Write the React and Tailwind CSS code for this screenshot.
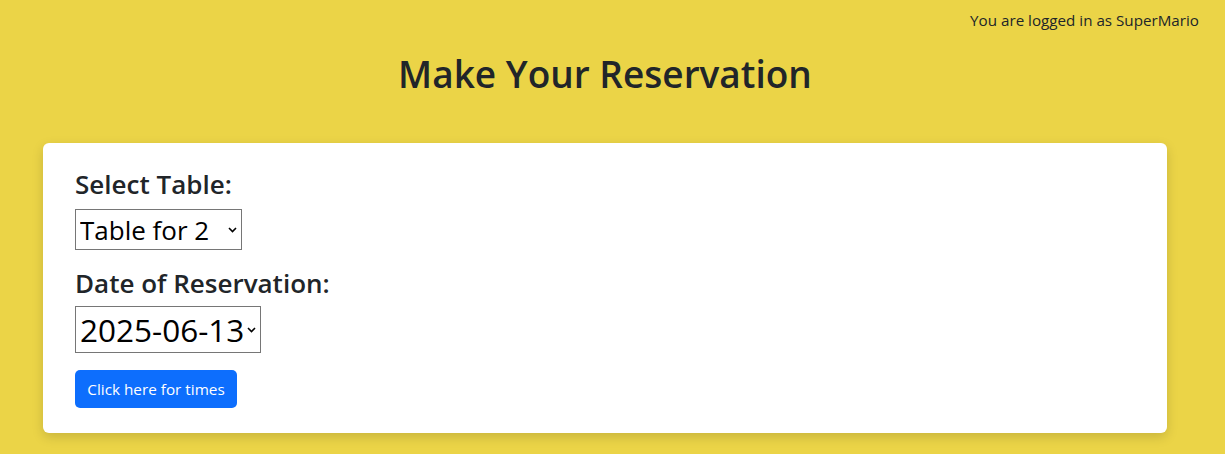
import React, { useState } from 'react';

const Chevron = () => (
  <svg
    className="pointer-events-none absolute right-[5px] top-1/2 -translate-y-1/2"
    width="9"
    height="6"
    viewBox="0 0 9 6"
    fill="none"
  >
    <path d="M1 1l3.5 3.5L8 1" stroke="#000" strokeWidth="1.6" />
  </svg>
);

const App = () => {
  const [table, setTable] = useState('2');
  const [date, setDate] = useState('2025-06-13');

  return (
    <div
      className="min-h-[454px] w-full bg-[#ebd447] text-[#212529]"
      style={{ fontFamily: '"Open Sans", "Noto Sans", sans-serif' }}
    >
      <div className="w-[1210px]">
        {/* Header */}
        <div className="flex justify-end pr-[11px] pt-[10px] text-[15.2px] leading-[20px]">
          You are logged in as SuperMario
        </div>
        <h1 className="mt-[22px] text-center text-[37px] font-semibold leading-[44px]">
          Make Your Reservation
        </h1>

        {/* Form card */}
        <div className="mx-[43px] mt-[47px] rounded-md bg-white px-[32px] pt-[24px] pb-[25px] shadow-[0_4px_12px_rgba(0,0,0,0.15)]">
          <label htmlFor="table" className="block text-[26px] font-semibold leading-[34px]">
            Select Table:
          </label>
          <div className="relative mt-[8px] inline-block">
            <select
              id="table"
              value={table}
              onChange={(e) => setTable(e.target.value)}
              className="h-[41px] w-[167px] appearance-none rounded-none border border-[#767676] bg-white pl-[4px] text-[26px] leading-[36px] text-black"
            >
              <option value="2">Table for 2</option>
              <option value="4">Table for 4</option>
              <option value="6">Table for 6</option>
            </select>
            <Chevron />
          </div>

          <label htmlFor="date" className="mt-[16px] block text-[26px] font-semibold leading-[34px]">
            Date of Reservation:
          </label>
          <div className="relative mt-[6px] inline-block">
            <select
              id="date"
              value={date}
              onChange={(e) => setDate(e.target.value)}
              className="h-[47px] w-[186px] appearance-none rounded-none border border-[#767676] bg-white pl-[4px] text-[31.5px] leading-[42px] text-black"
            >
              <option value="2025-06-13">2025-06-13</option>
              <option value="2025-06-14">2025-06-14</option>
              <option value="2025-06-15">2025-06-15</option>
            </select>
            <Chevron />
          </div>

          <div className="mt-[17px]">
            <button
              type="button"
              className="h-[38px] w-[162px] rounded-[5px] bg-[#0d6efd] text-[15.3px] text-white"
            >
              Click here for times
            </button>
          </div>
        </div>
      </div>
    </div>
  );
};

export default App;
